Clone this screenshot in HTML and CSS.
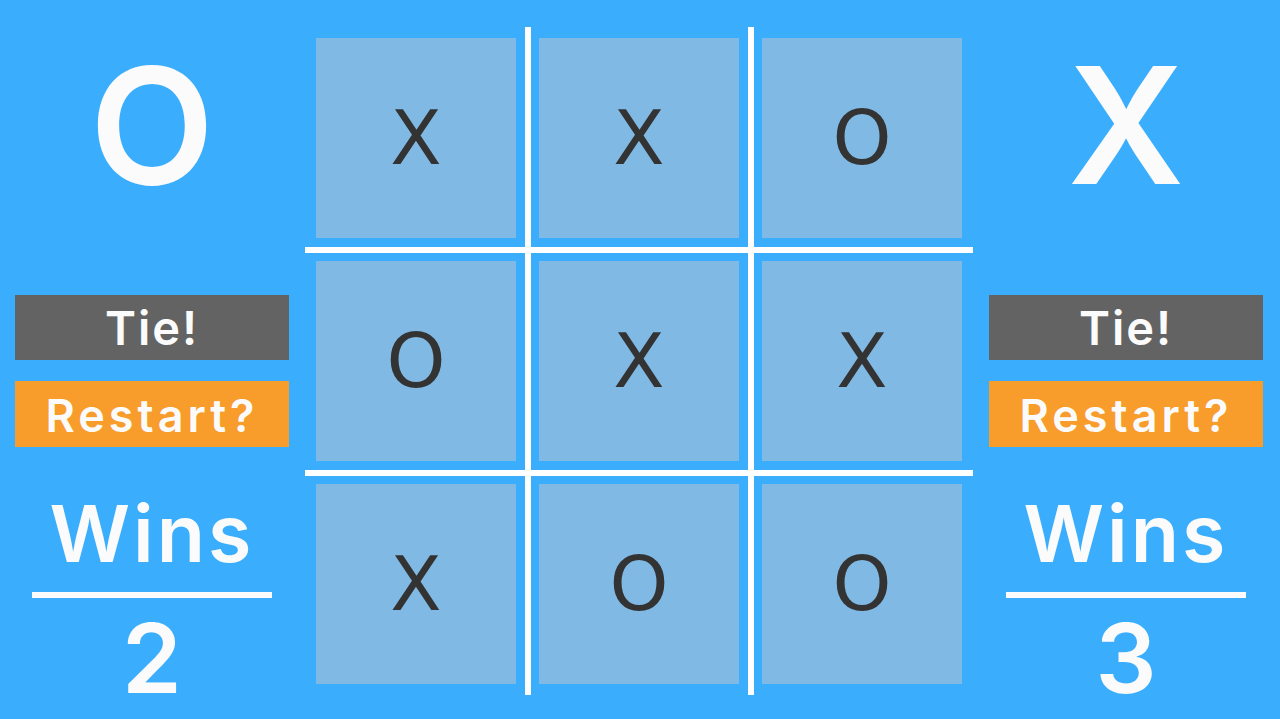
FILE: index.html
```html
<!DOCTYPE html>
<html lang="en">
<head>
    <meta charset="UTF-8">
    <meta name="viewport" content="width=device-width, initial-scale=1.0">
    <title>Tic Tac Toe</title>
    <link rel="stylesheet" href="styles.css">
</head>
<body>
    <main class="game">
        <!-- pemain O -->
        <section class="player">
            <div class="mark">O</div>
            <div class="status">Tie!</div>
            <button class="restart">Restart?</button>
            <div class="wins">Wins</div>
            <div class="score">2</div>
        </section>

        <div class="board">
            <div class="cell">X</div>
            <div class="cell">X</div>
            <div class="cell">O</div>
            <div class="cell">O</div>
            <div class="cell">X</div>
            <div class="cell">X</div>
            <div class="cell">X</div>
            <div class="cell">O</div>
            <div class="cell">O</div>
        </div>

        <!-- pemain X -->
        <section class="player">
            <div class="mark">X</div>
            <div class="status">Tie!</div>
            <button class="restart">Restart?</button>
            <div class="wins">Wins</div>
            <div class="score">3</div>
        </section>
    </main>
</body>
</html>
```

FILE: styles.css
```css
* {
    margin: 0;
    padding: 0;
    box-sizing: border-box;
}

body {
    background-color: #3aaefd;
    color: #fbfbfb;
    font-family: 'Inter', 'DejaVu Sans', sans-serif;
    height: 719px;
    overflow: hidden;
}

.game {
    display: flex;
    align-items: flex-start;
    gap: 16px;
    padding-left: 15px;
}

.player {
    width: 274px;
    display: flex;
    flex-direction: column;
    text-align: center;
    font-weight: 600;
}

.mark {
    font-size: 162px;
    line-height: 250px;
    height: 262px;
}

.status,
.restart {
    font-family: inherit;
    font-weight: 600;
    font-size: 47px;
    letter-spacing: 2px;
    color: #fbfbfb;
    border: none;
}

.status {
    margin-top: 33px;
    height: 65px;
    line-height: 65px;
    background-color: #636363;
}

.restart {
    margin-top: 21px;
    height: 66px;
    line-height: 66px;
    background-color: #f89c2c;
    font-size: 45px;
    letter-spacing: 4px;
    padding-top: 2px;
}

.wins {
    margin-top: 42px;
    font-size: 79px;
    letter-spacing: 3px;
    line-height: 88px;
    padding-bottom: 15px;
    margin-left: 17px;
    margin-right: 17px;
    border-bottom: 6px solid #fbfbfb;
}

.score {
    margin-top: 12px;
    font-size: 96px;
    line-height: 96px;
}

/* papan 3x3, garis putih lewat background */
.board {
    margin-top: 27px;
    display: grid;
    grid-template-columns: repeat(3, 200px);
    grid-template-rows: repeat(3, 200px);
    gap: 23px;
    padding: 11px;
    background:
        linear-gradient(#fff, #fff) 220px 0 / 6px 100% no-repeat,
        linear-gradient(#fff, #fff) 443px 0 / 6px 100% no-repeat,
        linear-gradient(#fff, #fff) 0 220px / 100% 6px no-repeat,
        linear-gradient(#fff, #fff) 0 443px / 100% 6px no-repeat;
}

.cell {
    background-color: #80b9e4;
    color: #333;
    font-family: 'DejaVu Sans', sans-serif;
    font-size: 75px;
    line-height: 1;
    display: flex;
    align-items: center;
    justify-content: center;
}
```
